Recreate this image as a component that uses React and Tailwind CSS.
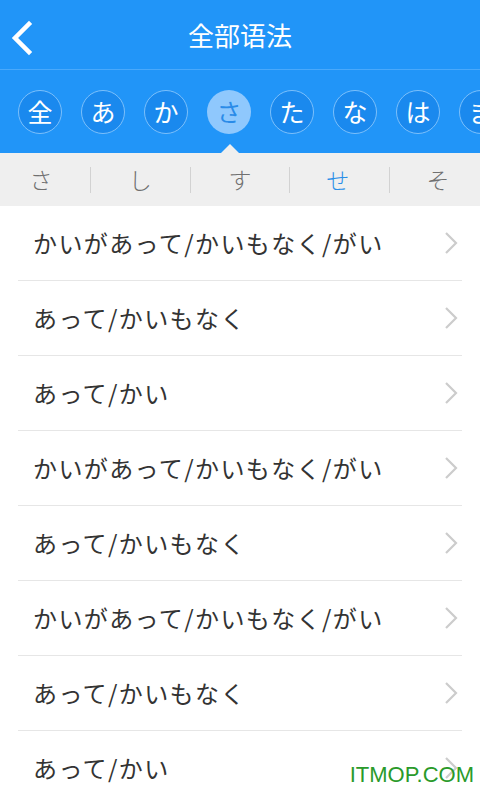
import React from 'react';

const kana = ['全', 'あ', 'か', 'さ', 'た', 'な', 'は', 'ま'];
const sub = ['さ', 'し', 'す', 'せ', 'そ'];
const rows = [
  'かいがあって/かいもなく/がい',
  'あって/かいもなく',
  'あって/かい',
  'かいがあって/かいもなく/がい',
  'あって/かいもなく',
  'かいがあって/かいもなく/がい',
  'あって/かいもなく',
  'あって/かい',
];

const font = { fontFamily: '"Noto Sans CJK JP", "Noto Sans", sans-serif' };

const App = () => {
  return (
    <div className="relative w-[480px] h-[800px] overflow-hidden bg-white" style={font}>
      {/* Top bar */}
      <header className="relative h-[70px] bg-[#2195f8] flex items-center justify-center border-b border-[#4aa9fb]">
        <svg className="absolute left-[10px] top-[20px]" width="24" height="36" viewBox="0 0 24 36">
          <path d="M19 4 L5 18 L19 32" fill="none" stroke="white" strokeWidth="4.5" strokeLinecap="square" />
        </svg>
        <h1 className="text-white text-[26px] leading-none">全部语法</h1>
      </header>

      {/* Kana tabs */}
      <div className="relative h-[83px] bg-[#2195f8] flex items-center gap-[19px] pl-[18px] overflow-hidden">
        {kana.map((k) => (
          <div
            key={k}
            className={
              k === 'さ'
                ? 'shrink-0 w-[44px] h-[44px] rounded-full bg-[#8fc8fd] text-[#2a8be8] flex items-center justify-center text-[25px]'
                : 'shrink-0 w-[44px] h-[44px] rounded-full bg-[#1a89ee] border border-[#7cc0fb] text-white flex items-center justify-center text-[25px]'
            }
          >
            {k}
          </div>
        ))}
        <div className="absolute left-[221px] bottom-0 w-0 h-0 border-l-[9px] border-r-[9px] border-b-[9px] border-l-transparent border-r-transparent border-b-[#efefef]" />
      </div>

      {/* Sub tabs */}
      <div className="h-[53px] bg-[#efefef] flex items-center">
        {sub.map((s, i) => (
          <React.Fragment key={s}>
            {i > 0 && <div className="w-px h-[26px] bg-[#d2d2d2]" />}
            <div
              className={`${i === 0 || i === 4 ? 'w-[90px]' : 'w-[99px]'} text-center text-[23px] font-light ${
                s === 'せ' ? 'text-[#2a8ee8]' : 'text-[#707070]'
              } ${i === 0 ? 'pr-[8px]' : ''} ${i === 3 ? 'pr-[4px]' : ''} ${i === 4 ? 'pl-[6px]' : ''}`}
            >
              {s}
            </div>
          </React.Fragment>
        ))}
      </div>

      {/* List */}
      <ul className="px-[18px]">
        {rows.map((r, i) => (
          <li key={i} className="h-[75px] flex items-center justify-between border-b border-[#e6e6e6] pl-[15px] pr-[4px]">
            <span className="text-[24px] text-[#333333] tracking-[1.4px]">{r}</span>
            <svg width="14" height="24" viewBox="0 0 14 24">
              <path d="M2 2 L12 12 L2 22" fill="none" stroke="#cccccc" strokeWidth="2.2" />
            </svg>
          </li>
        ))}
      </ul>

      {/* Watermark */}
      <div
        className="absolute right-[6px] bottom-[14px] text-[#2a9a2a] text-[22px] leading-none"
        style={{ fontFamily: '"Liberation Sans", Arial, sans-serif' }}
      >
        ITMOP.COM
      </div>
    </div>
  );
};

export default App;
